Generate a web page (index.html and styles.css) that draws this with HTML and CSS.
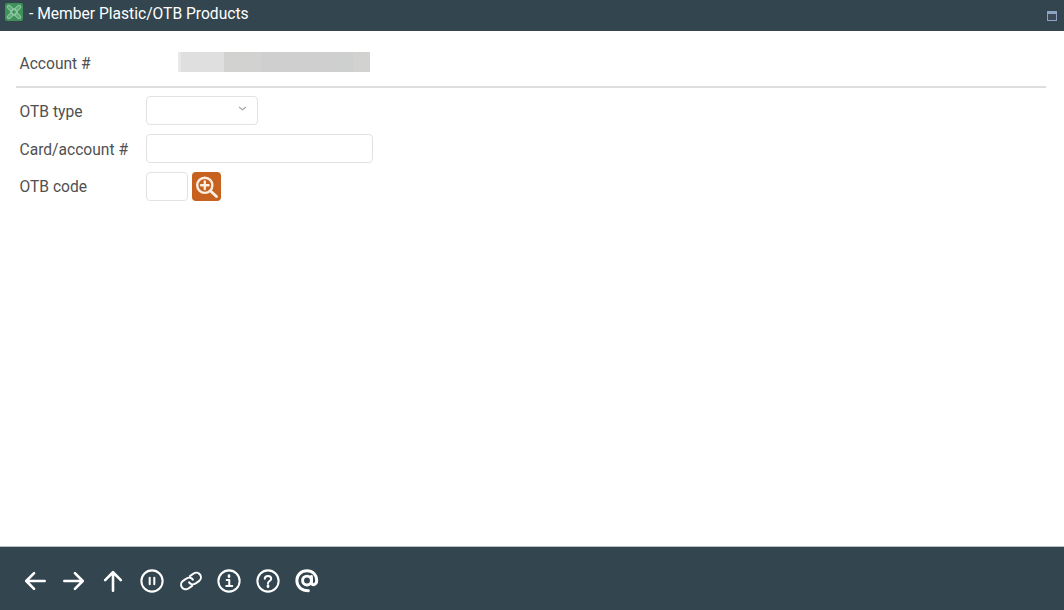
FILE: index.html
```html
<!DOCTYPE html>
<html lang="en">
<head>
    <meta charset="UTF-8">
    <title>Member Plastic/OTB Products</title>
    <link rel="stylesheet" href="styles.css">
</head>
<body>

    <!-- Title bar -->
    <div class="titlebar">
        <svg class="app-logo" width="18" height="18" viewBox="0 0 18 18">
            <rect width="18" height="18" rx="2" fill="#3f9159"/>
            <g fill="#5fae7b" stroke="#a3d4b3" stroke-width="0.8">
                <ellipse cx="5.200" cy="5.200" rx="3.600" ry="2" transform="rotate(45 5.200 5.200)"/>
                <ellipse cx="12.800" cy="5.200" rx="3.600" ry="2" transform="rotate(-45 12.800 5.200)"/>
                <ellipse cx="5.200" cy="12.800" rx="3.600" ry="2" transform="rotate(-45 5.200 12.800)"/>
                <ellipse cx="12.800" cy="12.800" rx="3.600" ry="2" transform="rotate(45 12.800 12.800)"/>
            </g>
            <path d="M9 5.500 L12.500 9 L9 12.500 L5.500 9 Z" fill="none" stroke="#8fcaa3" stroke-width="1.100"/>
        </svg>
        <span class="title">- Member Plastic/OTB Products</span>
        <div class="win-btn"><span></span></div>
    </div>

    <!-- Main Content -->
    <div class="content">
        <div class="account-row">
            <label>Account #</label>
            <div class="masked">
                <i class="m1"></i><i class="m2"></i><i class="m3"></i><i class="m4"></i><i class="m5"></i><i class="m6"></i>
            </div>
        </div>

        <div class="form">
            <div class="row">
                <label>OTB type</label>
                <div class="field select">
                    <svg width="9" height="5" viewBox="0 0 9 5"><path d="M1 1 L4.500 3.800 L8 1" fill="none" stroke="#a5a5a5" stroke-width="1.100"/></svg>
                </div>
            </div>
            <div class="row">
                <label>Card/account #</label>
                <div class="field wide"></div>
            </div>
            <div class="row row-code">
                <label>OTB code</label>
                <div class="field small"></div>
                <button class="btn-search">
                    <svg width="25" height="25" viewBox="0 0 25 25" fill="none" stroke="#fbeee3" stroke-linecap="round">
                        <circle cx="10.800" cy="11.300" r="7.600" stroke-width="2.400"/>
                        <path d="M10.800 7.500 V15.100 M7 11.300 H14.600" stroke-width="2.400"/>
                        <path d="M16.600 17 L22.500 22.500" stroke-width="3"/>
                    </svg>
                </button>
            </div>
        </div>
    </div>

    <!-- Footer toolbar -->
    <div class="footer">
        <svg class="icon" viewBox="0 0 26 26"><path d="M23.500 13 H3.500 M12 4.500 L3.500 13 L12 21.500"/></svg>
        <svg class="icon" viewBox="0 0 26 26"><path d="M2.500 13 H22.500 M14 4.500 L22.500 13 L14 21.500"/></svg>
        <svg class="icon" viewBox="0 0 26 26"><path d="M13 23.500 V3.500 M4.500 12 L13 3.500 L21.500 12"/></svg>
        <svg class="icon thin" viewBox="0 0 26 26"><circle cx="13" cy="13" r="11.500"/><path d="M10.500 9.500 V16.500 M15.500 9.500 V16.500"/></svg>
        <svg class="icon thin" viewBox="0 0 26 26"><g transform="rotate(-35 13 13)"><path d="M11 18 H6 A5 5 0 0 1 6 8 H11 A5 5 0 0 1 15.500 13"/><path d="M15 8 H20 A5 5 0 0 1 20 18 H15 A5 5 0 0 1 10.500 13"/></g></svg>
        <svg class="icon thin" viewBox="0 0 26 26"><circle cx="13" cy="13" r="11.500"/><path d="M10.500 12 H13.300 V18.500 M10 18.500 H16.500"/><path d="M13 7.200 V8.400" stroke-width="2.800"/></svg>
        <svg class="icon thin" viewBox="0 0 26 26"><circle cx="13" cy="13" r="11.500"/><path d="M9.500 10.500 C9.500 6.500 16.500 6.500 16.500 10.500 C16.500 13 13 13 13 15.500"/><path d="M13 18 V19.200" stroke-width="2.800"/></svg>
        <svg class="icon at" viewBox="0 0 26 26"><circle cx="13" cy="12.500" r="4.800"/><path d="M17.800 8 V14.500 C17.800 18.500 23.500 17.500 23.500 12.500 C23.500 6 19 2 13 2 C6.500 2 2 6.500 2 12.500 C2 19.500 7.500 23.500 14.500 23.500"/></svg>
    </div>

</body>
</html>
```

FILE: styles.css
```css
* {
    margin: 0;
    padding: 0;
    box-sizing: border-box;
    font-family: 'Roboto', sans-serif;
}

body {
    display: flex;
    flex-direction: column;
    height: 100vh;
    background-color: #fff;
    color: #505050;
    font-size: 15.6px;
    overflow: hidden;
}

/* Title bar */
.titlebar {
    height: 31px;
    background-color: #33464f;
    display: flex;
    align-items: center;
    padding: 0 7px 4px 5px;
    color: #fff;
}

.app-logo {
    margin-right: 6px;
    margin-bottom: 3px;
}

.title {
    flex: 1;
    font-size: 15.6px;
}

.win-btn {
    width: 10px;
    height: 10px;
    margin-top: 5px;
    background: #8ea2c4;
    padding: 3px 1px 1px;
}

.win-btn span {
    display: block;
    height: 100%;
    background: #3c4a5a;
}

/* Main content */
.content {
    flex: 1;
    padding: 0 18px 0 16px;
}

.account-row {
    height: 57px;
    display: flex;
    align-items: flex-start;
    padding: 21px 0 0 3.5px;
    border-bottom: 2px solid #dedede;
}

.account-row label {
    width: 158.5px;
    line-height: 20px;
    padding-top: 2px;
}

.masked {
    display: flex;
    width: 192px;
    height: 20px;
}

.masked i {
    display: block;
    height: 100%;
}

.m1 { width: 3px; background: #e8e8e8; }
.m2 { width: 43px; background: #dfdfdf; }
.m3 { width: 37px; background: #d2d2d0; }
.m4 { width: 79px; background: #cfcfcf; }
.m5 { width: 13px; background: #cdd0cf; }
.m6 { width: 17px; background: #d2d2d0; }

.form {
    padding-top: 8px;
}

.row {
    display: flex;
    align-items: center;
    height: 29px;
    margin-bottom: 9px;
    padding-left: 3.5px;
}

.row label {
    width: 126.5px;
    padding-top: 3px;
}

.row-code label {
    padding-top: 1px;
}

.field {
    height: 29px;
    background: #fff;
    border: 1px solid #dfe3e6;
    border-radius: 4px;
}

.select {
    width: 112px;
    display: flex;
    justify-content: flex-end;
    padding: 9px 10px 0 0;
}

.select svg {
    display: block;
}

.wide {
    width: 227px;
}

.small {
    width: 42px;
}

.btn-search {
    width: 29px;
    height: 29px;
    margin-left: 4px;
    border: none;
    border-radius: 4px;
    background-color: #c6611f;
    display: flex;
    align-items: center;
    justify-content: center;
}

/* Footer toolbar */
.footer {
    height: 64px;
    background-color: #33464f;
    border-top: 1px solid #b9bfc3;
    display: flex;
    align-items: center;
    gap: 14.8px;
    padding: 4px 0 0 23.4px;
}

.icon {
    width: 24px;
    height: 24px;
    fill: none;
    stroke: #fff;
    stroke-width: 2.8;
    stroke-linecap: round;
    stroke-linejoin: round;
}

.thin {
    stroke-width: 2.2;
}

.at {
    stroke-width: 3.2;
}
```
